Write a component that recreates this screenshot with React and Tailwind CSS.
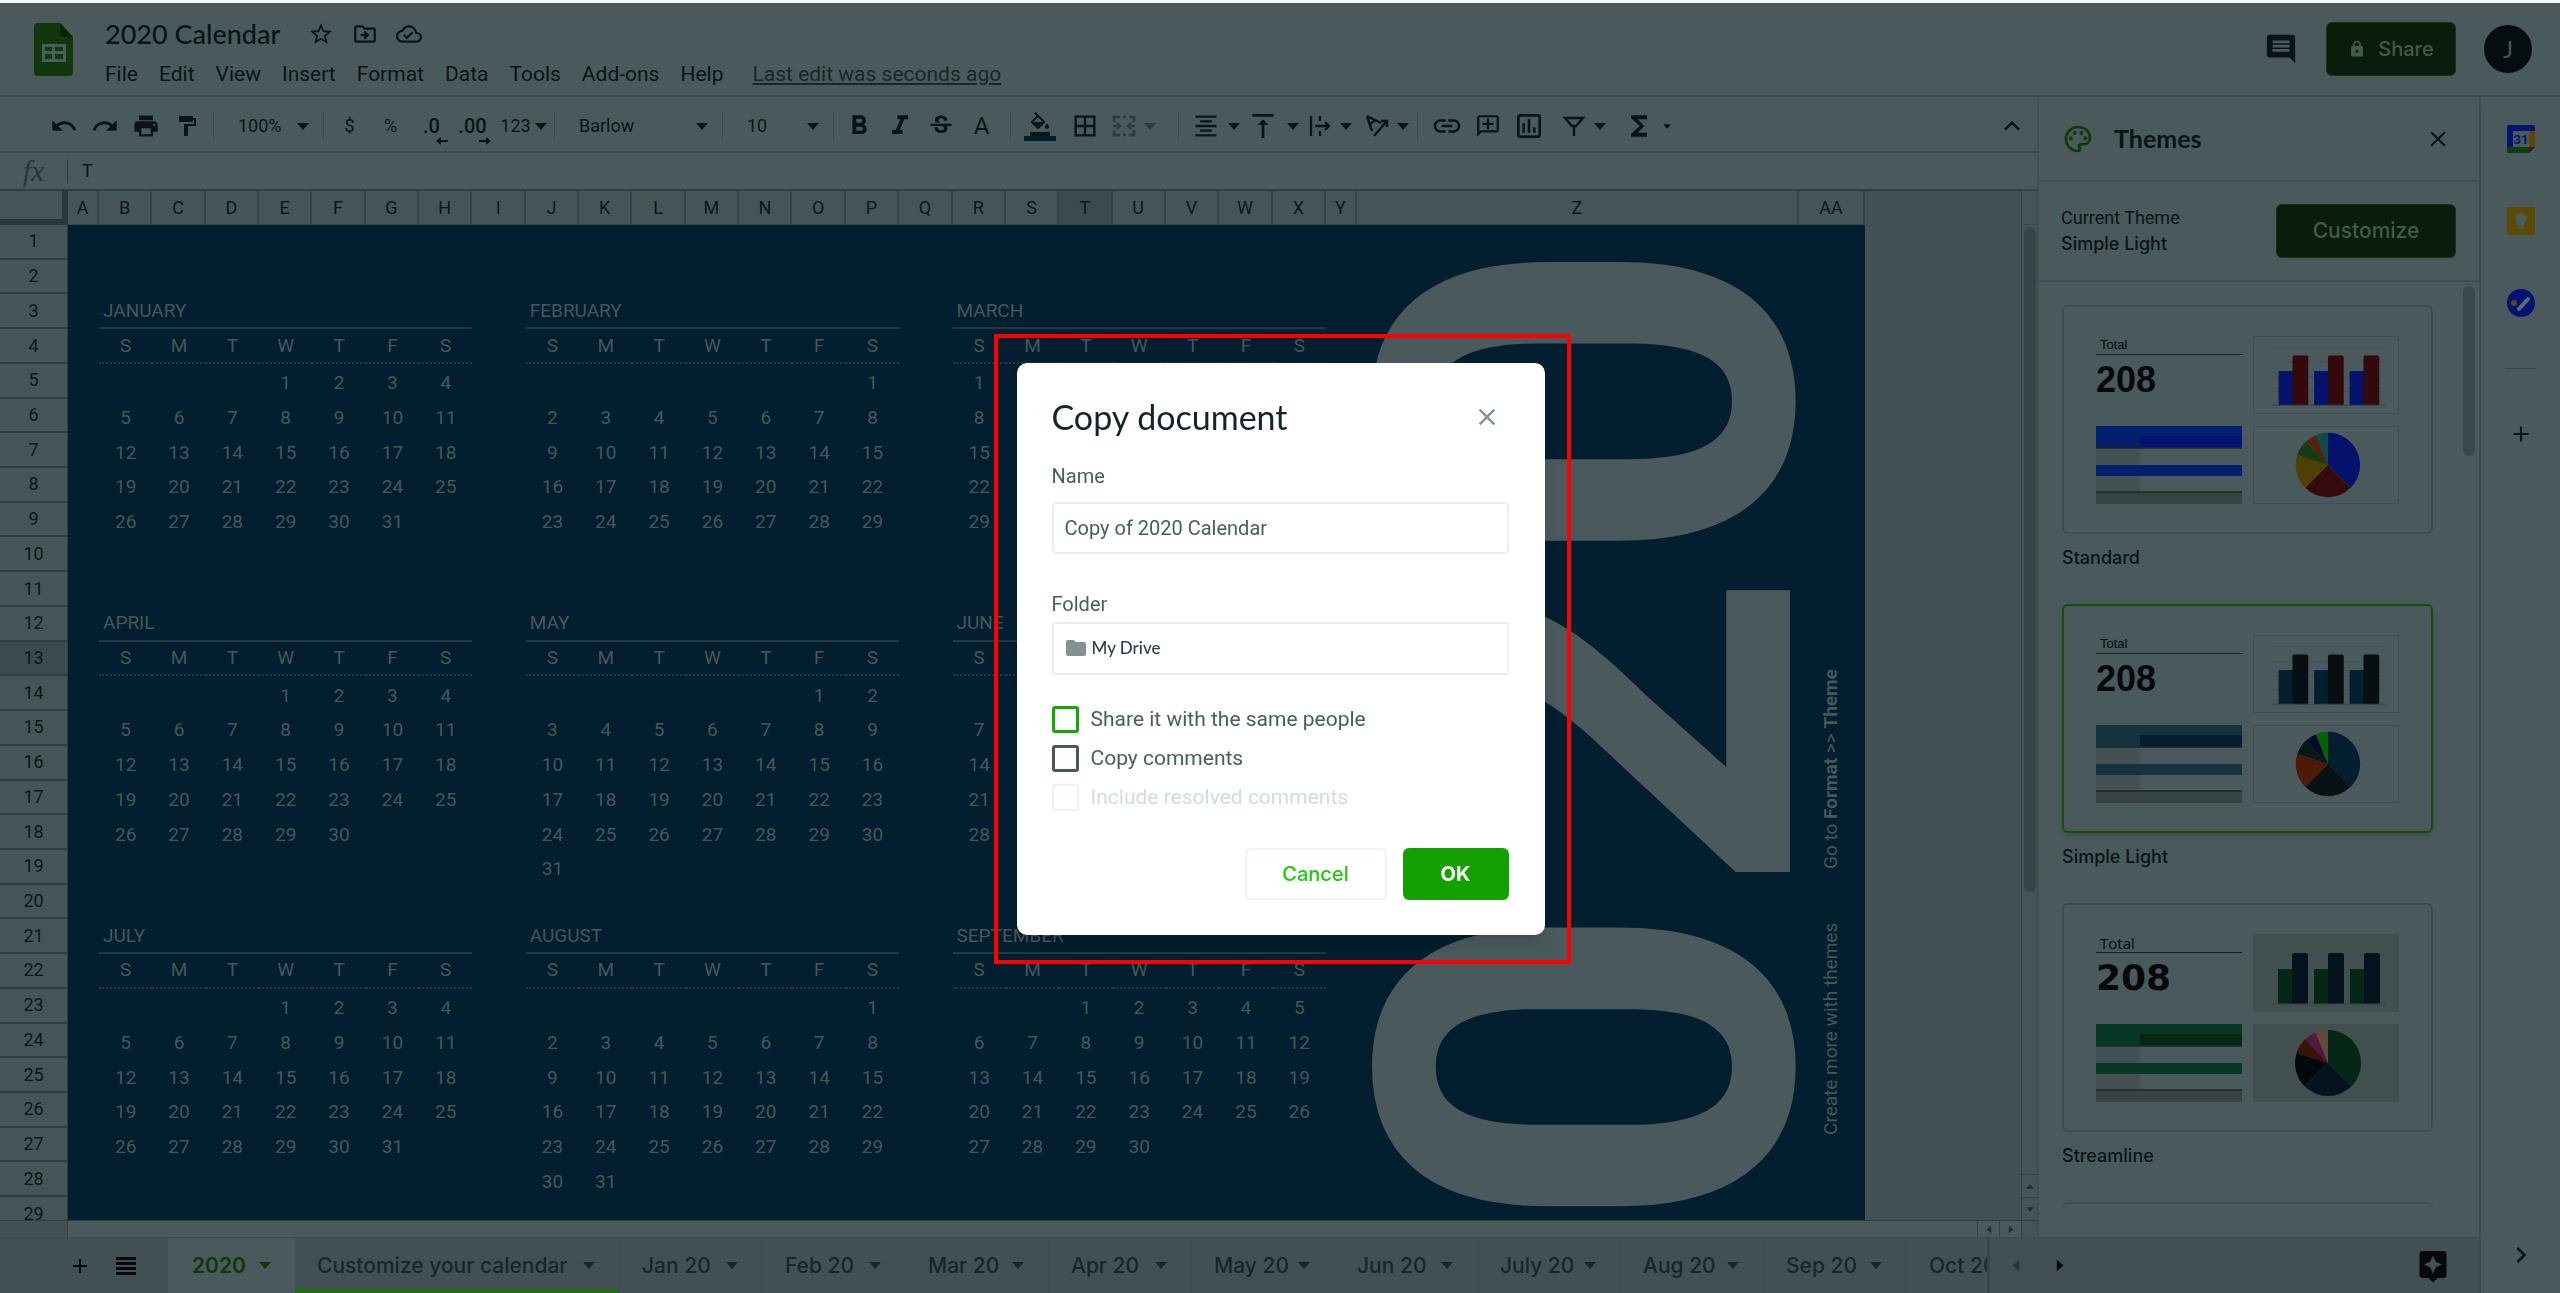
import { useState } from "react";
import clsx from "clsx";
import {
  MdAdd,
  MdAssistant,
  MdBorderAll,
  MdChevronRight,
  MdClose,
  MdComment,
  MdFolder,
  MdFormatAlignCenter,
  MdFormatBold,
  MdFormatColorFill,
  MdFormatItalic,
  MdFormatPaint,
  MdFunctions,
  MdInsertLink,
  MdKeyboardArrowUp,
  MdLock,
  MdOutlineAddComment,
  MdOutlineCloudDone,
  MdOutlineDriveFileMove,
  MdOutlineInsertChart,
  MdOutlinePalette,
  MdPrint,
  MdRedo,
  MdStarBorder,
  MdStrikethroughS,
  MdUndo,
  MdVerticalAlignTop,
} from "react-icons/md";

const MENUS = ["File", "Edit", "View", "Insert", "Format", "Data", "Tools", "Add-ons", "Help"];
const TABS = ["Jan 20", "Feb 20", "Mar 20", "Apr 20", "May 20", "Jun 20", "July 20", "Aug 20", "Sep 20"];
const COLUMNS = [..."ABCDEFGHIJKLMNOPQRSTUVWXYZ", "AA"];
const WEEKDAYS = ["S", "M", "T", "W", "T", "F", "S"];

// row / col: sheet position of the month title, start: weekday of the 1st
const MONTHS = [
  { name: "JANUARY", row: 3, col: 1, start: 3, days: 31 },
  { name: "FEBRUARY", row: 3, col: 9, start: 6, days: 29 },
  { name: "MARCH", row: 3, col: 17, start: 0, days: 31 },
  { name: "APRIL", row: 12, col: 1, start: 3, days: 30 },
  { name: "MAY", row: 12, col: 9, start: 5, days: 31 },
  { name: "JUNE", row: 12, col: 17, start: 1, days: 30 },
  { name: "JULY", row: 21, col: 1, start: 3, days: 31 },
  { name: "AUGUST", row: 21, col: 9, start: 6, days: 31 },
  { name: "SEPTEMBER", row: 21, col: 17, start: 2, days: 30 },
];

const THEMES = [
  {
    name: "Standard",
    font: "font-['Liberation_Sans'] text-[36px]",
    labelFont: "font-['Liberation_Sans'] text-[13px]",
    bars: ["#04126c", "#34090c"],
    pie: ["#04126c", "#340a0c", "#4e3f02", "#143b12", "#54210a", "#0d4a48"],
    table: ["#031f6e", "#021372"],
  },
  {
    name: "Simple Light",
    font: "font-['Liberation_Sans'] text-[36px]",
    labelFont: "font-['Liberation_Sans'] text-[13px]",
    bars: ["#021e2f", "#070f12"],
    pie: ["#021e2f", "#0a1114", "#4f1a05", "#081817", "#060a26", "#026406"],
    table: ["#15323f", "#021e2f"],
  },
  {
    name: "Streamline",
    font: "font-['DejaVu_Sans'] text-[36px]",
    labelFont: "font-['Open_Sans'] text-[15px]",
    bars: ["#042716", "#05131f"],
    pie: ["#042716", "#05131f", "#04090f", "#3a1208", "#531840", "#604a3c"],
    table: ["#073826", "#052716"],
    tinted: true,
  },
];

const PIE_STOPS = [0, 135, 225, 288, 316, 338, 360];

function Caret({ small, className }) {
  return (
    <svg
      viewBox="0 0 12 7"
      className={clsx("shrink-0", small ? "h-[5px] w-2" : "h-[7px] w-3", className)}
      fill="currentColor"
      aria-hidden="true"
    >
      <path d="M0 0h12L6 7z" />
    </svg>
  );
}

function Divider() {
  return <span className="h-[30px] w-px shrink-0 bg-[#3c4b50]" />;
}

function Tool({ label, wide, children }) {
  return (
    <button
      aria-label={label}
      className={clsx("flex h-10 shrink-0 items-center justify-center gap-2", wide ? "w-[57px]" : "w-[41px]")}
    >
      {children}
    </button>
  );
}

function ToolSelect({ label, value, className }) {
  return (
    <div className={clsx("relative flex shrink-0 items-center", className)}>
      <select aria-label={label} defaultValue={value} className="w-full appearance-none bg-transparent pl-6 text-lg leading-6">
        <option>{value}</option>
      </select>
      <Caret className="pointer-events-none absolute right-3.5" />
    </div>
  );
}

function SheetsLogo() {
  return (
    <svg viewBox="0 0 39 53" className="h-[53px] w-[39px]" aria-hidden="true">
      <path d="M4 0h22l13 14v35a4 4 0 0 1-4 4H4a4 4 0 0 1-4-4V4a4 4 0 0 1 4-4z" fill="#12370c" />
      <path d="M26 0l13 14H29a3 3 0 0 1-3-3z" fill="#0a2409" />
      <path d="M8 21h24v18H8zM11 24v4h7v-4zM21 24v4h8v-4zM11 31v5h7v-5zM21 31v5h8v-5z" fill="#45605a" fillRule="evenodd" />
    </svg>
  );
}

function Header() {
  return (
    <header className="flex h-[94px] shrink-0 items-center border-b-2 border-[#3d4c50] pr-7 pl-[34px]">
      <SheetsLogo />
      <div className="ml-8 flex flex-col pt-2.5">
        <div className="flex h-10 items-center gap-[18px]">
          <h1 className="mr-2.5 font-['Lato'] text-[27px] leading-10 font-medium">2020 Calendar</h1>
          <button aria-label="Star"><MdStarBorder className="size-[26px]" /></button>
          <button aria-label="Move"><MdOutlineDriveFileMove className="size-[26px]" /></button>
          <button aria-label="Document status"><MdOutlineCloudDone className="size-[26px]" /></button>
        </div>
        <nav className="flex h-10 items-center gap-[21px] text-[21px] leading-7">
          {MENUS.map((m) => (
            <button key={m}>{m}</button>
          ))}
          <a href="#history" className="ml-2 text-[#19262a] underline">
            Last edit was seconds ago
          </a>
        </nav>
      </div>
      <div className="ml-auto flex items-center">
        <button aria-label="Comments" className="mr-7"><MdComment className="size-[34px]" /></button>
        <button className="mr-7 flex h-[54px] w-[130px] items-center justify-center gap-3 rounded-md border border-[#12370c] bg-[#0a1c0c] font-['Inter'] text-xl font-medium text-[#3f5d46]">
          <MdLock className="size-[18px]" />
          Share
        </button>
        <button aria-label="Account" className="size-12 rounded-full bg-[#060d10] font-['Lato'] text-2xl text-[#46555a]">
          J
        </button>
      </div>
    </header>
  );
}

function Toolbar() {
  return (
    <div className="flex h-14 shrink-0 items-center border-b-2 border-[#3d4c50] pt-1 pl-[43px]">
      <Tool label="Undo"><MdUndo className="size-7" /></Tool>
      <Tool label="Redo"><MdRedo className="size-7" /></Tool>
      <Tool label="Print"><MdPrint className="size-7" /></Tool>
      <Tool label="Paint format"><MdFormatPaint className="size-6" /></Tool>
      <span className="w-1.5" />
      <Divider />
      <ToolSelect label="Zoom" value="100%" className="w-[109px]" />
      <Divider />
      <span className="w-[5px]" />
      <Tool label="Currency"><span className="text-lg">$</span></Tool>
      <Tool label="Percent"><span className="text-lg">%</span></Tool>
      <Tool label="Decrease decimals">
        <span className="relative text-[20px] font-medium">
          .0
          <svg viewBox="0 0 12 8" className="absolute -right-2 bottom-[-4px] h-2 w-3" fill="currentColor"><path d="M0 4l5-4v3h7v2H5v3z" /></svg>
        </span>
      </Tool>
      <Tool label="Increase decimals">
        <span className="relative text-[20px] font-medium">
          .00
          <svg viewBox="0 0 12 8" className="absolute -right-1 bottom-[-4px] h-2 w-3" fill="currentColor"><path d="M12 4L7 0v3H0v2h7v3z" /></svg>
        </span>
      </Tool>
      <button className="flex w-[61px] items-center justify-center gap-1 text-lg">
        123 <Caret />
      </button>
      <Divider />
      <ToolSelect label="Font" value="Barlow" className="w-[167px]" />
      <Divider />
      <ToolSelect label="Font size" value="10" className="w-[110px]" />
      <Divider />
      <span className="w-1" />
      <Tool label="Bold"><MdFormatBold className="size-8" /></Tool>
      <Tool label="Italic"><MdFormatItalic className="size-8" /></Tool>
      <Tool label="Strikethrough"><MdStrikethroughS className="size-7" /></Tool>
      <Tool label="Text color"><span className="text-2xl leading-6">A</span></Tool>
      <span className="w-2" />
      <Divider />
      <span className="w-2" />
      <Tool label="Fill color">
        <span className="flex flex-col items-center">
          <MdFormatColorFill className="size-6" />
          <span className="h-[5px] w-8 bg-[#021e33]" />
        </span>
      </Tool>
      <span className="w-1" />
      <Tool label="Borders"><MdBorderAll className="size-7" /></Tool>
      <Tool label="Merge cells" wide>
        <svg viewBox="0 0 24 24" className="size-6 shrink-0 text-[#2b3a3e]" fill="none" stroke="currentColor" strokeWidth="2.4">
          <path d="M2 8V3h6M11 3h3M17 3h5v5M2 16v5h6M11 21h3M17 21h5v-5M1 12h7M5 9l3 3-3 3M23 12h-7M19 9l-3 3 3 3" />
        </svg>
        <Caret className="text-[#2b3a3e]" />
      </Tool>
      <span className="w-4" />
      <Divider />
      <span className="w-2" />
      <Tool label="Horizontal align" wide><MdFormatAlignCenter className="size-7 shrink-0" /><Caret /></Tool>
      <Tool label="Vertical align" wide><MdVerticalAlignTop className="size-8 shrink-0" /><Caret /></Tool>
      <Tool label="Text wrapping" wide>
        <svg viewBox="0 0 24 24" className="size-6 shrink-0" fill="none" stroke="currentColor" strokeWidth="2.4">
          <path d="M3 2v20M12 2v5M12 17v5M7 12h14M17 8l4 4-4 4" />
        </svg>
        <Caret />
      </Tool>
      <Tool label="Text rotation" wide>
        <svg viewBox="0 0 24 24" className="size-6 shrink-0" fill="none" stroke="currentColor" strokeWidth="2.4">
          <path d="M2 2l5 15M2 2l14 7M5 10l6-4M9 22L22 7M16 7h6v6" />
        </svg>
        <Caret />
      </Tool>
      <span className="w-0.5" />
      <Divider />
      <span className="w-2" />
      <Tool label="Insert link"><MdInsertLink className="size-8" /></Tool>
      <Tool label="Insert comment"><MdOutlineAddComment className="size-[26px] -scale-x-100" /></Tool>
      <Tool label="Insert chart"><MdOutlineInsertChart className="size-8" /></Tool>
      <span className="w-1.5" />
      <Tool label="Create a filter" wide>
        <svg viewBox="0 0 24 24" className="size-6 shrink-0" fill="none" stroke="currentColor" strokeWidth="2.4">
          <path d="M3 4h18l-7 8H10zM12 11v11" />
        </svg>
        <Caret />
      </Tool>
      <span className="w-1.5" />
      <Tool label="Functions" wide><MdFunctions className="size-8 shrink-0" /><Caret small /></Tool>
      <button aria-label="Hide menus" className="mr-2.5 ml-auto"><MdKeyboardArrowUp className="size-8" /></button>
    </div>
  );
}

function FormulaBar() {
  return (
    <div className="flex h-9 shrink-0 items-center">
      <span className="w-[67px] text-center font-['Liberation_Serif'] text-[30px] leading-8 text-[#26363a] italic">fx</span>
      <span className="h-6 w-px bg-[#2b3a3e]" />
      <input aria-label="Formula" defaultValue="T" className="flex-1 bg-transparent px-3.5 text-lg leading-6 outline-none" />
    </div>
  );
}

// One sheet row from column A to Y
function rowCells(row) {
  const cells = [];
  for (let col = 0; col < 25; col++) {
    const month = MONTHS.find((m) => row >= m.row && row < m.row + 8 && col >= m.col && col < m.col + 7);
    if (!month) {
      cells.push(<td key={col} />);
      continue;
    }
    const line = row - month.row;
    const weekday = col - month.col;
    if (line === 0) {
      cells.push(
        <td key={col} colSpan={7} className="border-b-2 border-[#22383f] px-1 text-left">
          {month.name}
        </td>
      );
      col += 6;
    } else if (line === 1) {
      cells.push(
        <td key={col} className="border-b-2 border-dotted border-[#22383f]">
          {WEEKDAYS[weekday]}
        </td>
      );
    } else {
      const day = (line - 2) * 7 + weekday - month.start + 1;
      cells.push(
        <td key={col} className="pt-1">
          {day > 0 && day <= month.days ? day : null}
        </td>
      );
    }
  }
  return cells;
}

function Sheet() {
  return (
    <div className="flex min-h-0 flex-1">
      <div className="min-w-0 flex-1 overflow-hidden border-t-2 border-[#2f3c40] bg-[#435154]">
        <table className="h-[1041px] w-[1865px] table-fixed border-separate border-spacing-0 text-center text-[19px] leading-6 text-[#46575a]">
          <colgroup>
            <col className="w-[68px]" />
            {COLUMNS.map((c) => (
              <col
                key={c}
                className={clsx(
                  (c === "A" || c === "Y") && "w-[31px]",
                  c === "Z" && "w-[442px]",
                  c === "AA" && "w-[66px]"
                )}
              />
            ))}
          </colgroup>
          <thead>
            <tr className="text-lg text-[#0d171a]">
              <td className="h-[34px] border-r-[6px] border-b-[6px] border-[#2b3638] bg-[#445557]" />
              {COLUMNS.map((c) => (
                <th
                  key={c}
                  className={clsx(
                    "h-[34px] border-r-2 border-b border-[#35444a] p-0 font-normal",
                    c === "T" ? "bg-[#3c494f]" : "bg-[#445557]"
                  )}
                >
                  {c}
                </th>
              ))}
            </tr>
          </thead>
          <tbody className="bg-[#021e2f]">
            {Array.from({ length: 29 }, (_, i) => i + 1).map((row) => (
              <tr key={row}>
                <th
                  className={clsx(
                    "h-[34px] border-r border-b-2 border-[#2f3c40] p-0 text-lg font-normal text-[#0d171a]",
                    row === 13 ? "bg-[#3c494f]" : "bg-[#445557]"
                  )}
                >
                  {row}
                </th>
                {rowCells(row)}
                {row === 1 && (
                  <>
                    <td rowSpan={29} className="relative">
                      <span className="absolute top-2.5 left-3.5 rotate-180 text-[580px] leading-[442px] font-bold text-[#4a595c] [writing-mode:vertical-rl]">
                        020
                      </span>
                    </td>
                    <td rowSpan={29} className="relative">
                      <div className="absolute top-[444px] left-5 flex rotate-180 gap-[54px] whitespace-nowrap [writing-mode:vertical-rl]">
                        <span>Create more with themes</span>
                        <span>
                          Go to <b>Format</b> &gt;&gt; <b>Theme</b>
                        </span>
                      </div>
                    </td>
                  </>
                )}
              </tr>
            ))}
          </tbody>
        </table>
      </div>
      <div className="flex w-[17px] shrink-0 flex-col border-t-2 border-l border-[#35444a] bg-[#455557]">
        <span className="h-[34px] border-b border-[#3a494c]" />
        <span className="mx-0.5 mt-0.5 h-[665px] rounded-full bg-[#35444b]" />
        <button aria-label="Scroll up" className="mt-auto flex h-[23px] items-center justify-center border-t border-[#35444a] text-[#1f2c30]">
          <Caret small className="rotate-180" />
        </button>
        <button aria-label="Scroll down" className="flex h-[23px] items-center justify-center border-t border-[#35444a] text-[#1f2c30]">
          <Caret small />
        </button>
      </div>
    </div>
  );
}

function SheetScrollBar() {
  return (
    <div className="flex h-[17px] shrink-0 border-t border-[#2f3c40]">
      <span className="w-[68px] border-r border-[#35444a] bg-[#435154]" />
      <span className="flex-1" />
      <button aria-label="Scroll left" className="flex w-[22px] items-center justify-center border-l border-[#35444a] text-[#1f2c30]">
        <Caret small className="rotate-90" />
      </button>
      <button aria-label="Scroll right" className="flex w-[22px] items-center justify-center border-l border-[#35444a] text-[#1f2c30]">
        <Caret small className="-rotate-90" />
      </button>
      <span className="w-[17px] border-l border-[#35444a] bg-[#455557]" />
    </div>
  );
}

function slicePath(from, to) {
  const at = (deg) => {
    const a = (deg * Math.PI) / 180;
    return `${75 + 33 * Math.sin(a)} ${39 - 33 * Math.cos(a)}`;
  };
  return `M75 39L${at(from)}A33 33 0 0 1 ${at(to)}Z`;
}

function ThemeCard({ theme, selected, onSelect }) {
  const panel = theme.tinted ? "bg-[#41504f]" : "border border-[#415054]";
  return (
    <div className="mb-[34px] w-[371px]">
      <button
        aria-label={theme.name}
        aria-pressed={selected}
        onClick={onSelect}
        className={clsx(
          "grid h-[229px] w-full grid-cols-2 grid-rows-[78px_78px] gap-x-[11px] gap-y-3 rounded-md px-8 pt-[29px] text-left",
          selected ? "border-2 border-[#184a0b] shadow-md" : "border-2 border-[#3d4c52]"
        )}
      >
        <span className="flex flex-col text-[#05090b]">
          <span className={clsx("border-b border-[#141d20] pl-1 leading-[18px]", theme.labelFont)}>Total</span>
          <span className={clsx("leading-[50px] font-bold", theme.font)}>208</span>
        </span>
        <svg viewBox="0 0 146 78" preserveAspectRatio="none" className={clsx("h-full w-full", panel)} aria-hidden="true">
          <path d="M18 11h115M18 26h115M18 41h115M18 56h115" stroke="#435256" />
          {[25, 61, 97].map((x) => (
            <g key={x}>
              <rect x={x} y="35" width="15" height="35" fill={theme.bars[0]} />
              <rect x={x + 14} y="19" width="16" height="51" rx="2" fill={theme.bars[1]} />
            </g>
          ))}
          <path d="M18 70h115" stroke="#35444a" />
        </svg>
        <svg viewBox="0 0 146 78" preserveAspectRatio="none" className="h-full w-full" aria-hidden="true">
          <rect width="146" height="22" fill={theme.table[0]} />
          <rect x="44" y="10" width="102" height="12" fill={theme.table[1]} />
          <rect y="22" width="44" height="44" fill="#435153" />
          <rect y="39" width="146" height="11" fill={theme.table[0]} />
          <rect y="66" width="146" height="12" fill="#374341" />
          <path d="M0 22h146M0 66h146" stroke="#1c2628" strokeWidth="1.5" />
        </svg>
        <svg viewBox="0 0 146 78" className={clsx("h-full w-full", panel)} aria-hidden="true">
          {theme.pie.map((color, i) => (
            <path key={color} d={slicePath(PIE_STOPS[i], PIE_STOPS[i + 1])} fill={color} />
          ))}
        </svg>
      </button>
      <p className="mt-3 font-['Inter'] text-lg leading-6 font-medium">{theme.name}</p>
    </div>
  );
}

function ThemesPanel() {
  const [selected, setSelected] = useState("Simple Light");
  return (
    <aside className="flex w-[441px] shrink-0 flex-col border-l border-[#414f53] shadow-md">
      <div className="flex h-[85px] shrink-0 items-center border-b-2 border-[#3f4e52] pr-7 pl-[23px]">
        <MdOutlinePalette className="size-8 text-[#12370c]" />
        <h2 className="ml-5 font-['Lato'] text-[25px] font-bold">Themes</h2>
        <button aria-label="Close themes" className="ml-auto"><MdClose className="size-[26px]" /></button>
      </div>
      <div className="flex h-[100px] shrink-0 items-center justify-between border-b-2 border-[#3f4e52] pr-[23px] pl-[22px]">
        <div className="text-lg leading-[26px]">
          <p>Current Theme</p>
          <p className="font-['Inter'] font-medium">Simple Light</p>
        </div>
        <button className="h-[54px] w-[180px] rounded-md border border-[#12370c] bg-[#0a1c0c] font-['Inter'] text-[21px] font-medium text-[#3f5d46]">
          Customize
        </button>
      </div>
      <div className="mb-[30px] flex min-h-0 flex-1 justify-between overflow-hidden pr-1 pl-[23px]">
        <div className="pt-[23px]">
          {THEMES.map((t) => (
            <ThemeCard key={t.name} theme={t} selected={t.name === selected} onSelect={() => setSelected(t.name)} />
          ))}
          <div className="h-20 rounded-md border-2 border-[#3d4c52]" />
        </div>
        <span className="mt-1 h-[170px] w-3 rounded-full bg-[#3a474f]" />
      </div>
    </aside>
  );
}

function SideRail() {
  return (
    <div className="flex w-[81px] shrink-0 flex-col items-center border-l-2 border-[#3d4c50] pt-7">
      <button aria-label="Calendar">
        <svg viewBox="0 0 28 28" className="size-7">
          <rect width="28" height="28" rx="2" fill="#03166f" />
          <path d="M22 6h6v16h-6z" fill="#5c4700" />
          <path d="M0 22h22v6H2a2 2 0 0 1-2-2z" fill="#0e3d0f" />
          <path d="M22 22h6l-6 6z" fill="#5a0a0a" />
          <path d="M22 28l6-6v6z" fill="#4a595c" />
          <rect x="6" y="6" width="16" height="16" fill="#4a595c" />
          <text x="14" y="19" textAnchor="middle" fontSize="13" fontWeight="700" fill="#03166f">31</text>
        </svg>
      </button>
      <button aria-label="Keep" className="mt-[54px]">
        <svg viewBox="0 0 28 28" className="size-7">
          <rect width="28" height="28" rx="2" fill="#5a4a02" />
          <path d="M14 6a6 6 0 0 0-3 11v2h6v-2a6 6 0 0 0-3-11zM11 20h6v2h-6z" fill="#4a5c56" />
        </svg>
      </button>
      <button aria-label="Tasks" className="mt-[54px]">
        <svg viewBox="0 0 28 28" className="size-7">
          <circle cx="14" cy="14" r="14" fill="#041273" />
          <path d="M12 20L21 10" stroke="#5b6c72" strokeWidth="4" strokeLinecap="round" />
          <circle cx="7" cy="14" r="3" fill="#5a4a02" />
        </svg>
      </button>
      <span className="mt-[51px] h-px w-[30px] bg-[#35444a]" />
      <button aria-label="Get add-ons" className="mt-[52px]"><MdAdd className="size-[26px]" /></button>
      <button aria-label="Hide side panel" className="mt-auto mb-[22px]"><MdChevronRight className="size-8" /></button>
    </div>
  );
}

function SheetTabs() {
  return (
    <footer className="flex h-14 shrink-0 items-stretch border-t border-[#3d4c50] bg-[#425055] font-['Inter'] text-[21px] font-medium text-[#18262a]">
      <div className="flex w-[168px] shrink-0 items-center gap-6 pl-[68px] text-[#05090b]">
        <button aria-label="Add sheet"><MdAdd className="size-6" /></button>
        <button aria-label="All sheets">
          <svg viewBox="0 0 20 20" className="size-5" fill="currentColor">
            <path d="M0 1h20v3H0zM0 6h20v3H0zM0 11h20v3H0zM0 16h20v3H0z" />
          </svg>
        </button>
      </div>
      <button className="flex w-[127px] shrink-0 items-center justify-between bg-[#4a595c] px-6 font-semibold text-[#0f3a08]">
        2020 <Caret />
      </button>
      <button className="flex w-[324px] shrink-0 items-center justify-between border-b-4 border-[#1a7005] pt-1 pr-6 pl-[22px]">
        Customize your calendar <Caret />
      </button>
      <div className="flex min-w-0 flex-1 overflow-hidden">
        {TABS.map((t) => (
          <button key={t} className="flex w-[143px] shrink-0 items-center justify-between border-l border-[#3d4b4f] pr-6 pl-[22px]">
            {t} <Caret />
          </button>
        ))}
        <button className="shrink-0 border-l border-[#3d4b4f] px-[22px]">Oct 20</button>
      </div>
      <div className="flex w-[492px] shrink-0 items-center border-l-[3px] border-[#374545] pl-5 text-[#05090b]">
        <button aria-label="Previous sheets"><Caret className="rotate-90 text-[#26353a]" /></button>
        <button aria-label="Next sheets" className="ml-8"><Caret className="-rotate-90" /></button>
        <button aria-label="Explore" className="mr-7 ml-auto"><MdAssistant className="size-9" /></button>
      </div>
    </footer>
  );
}

function CheckRow({ id, label, accent, disabled }) {
  return (
    <div className="flex h-[39px] items-center gap-3">
      <input
        id={id}
        type="checkbox"
        disabled={disabled}
        className={clsx(
          "size-[27px] appearance-none rounded-[3px]",
          accent && "border-[3px] border-[#14a800]",
          disabled && "border-2 border-[#ecf1f2]",
          !accent && !disabled && "border-[3px] border-[#435a66]"
        )}
      />
      <label htmlFor={id} className={clsx("text-[21px] leading-7", disabled ? "text-[#d2dcdd]" : "text-[#46605f]")}>
        {label}
      </label>
    </div>
  );
}

function CopyDialog() {
  return (
    <div className="fixed inset-0 flex items-center justify-center pt-1 pl-1">
      <div className="border-4 border-[#ff0000] py-[25px] pr-[22px] pl-[19px]">
        <div
          role="dialog"
          aria-labelledby="copy-title"
          className="flex h-[572px] w-[528px] flex-col rounded-[10px] bg-white pt-[33px] pr-9 pl-[35px] text-[20px] leading-7 text-[#46605f] shadow-lg"
        >
          <div className="flex items-center justify-between pr-2">
            <h2 id="copy-title" className="font-['Lato'] text-[34px] leading-[42px] text-[#13242b]">
              Copy document
            </h2>
            <button aria-label="Close" className="text-[#7f9292]"><MdClose className="size-7" /></button>
          </div>
          <label htmlFor="copy-name" className="mt-6">Name</label>
          <input
            id="copy-name"
            defaultValue="Copy of 2020 Calendar"
            className="mt-3 h-[52px] rounded-[5px] border-2 border-[#e8eef1] px-[11px] outline-none"
          />
          <span id="copy-folder" className="mt-9">Folder</span>
          <button
            aria-labelledby="copy-folder copy-folder-value"
            className="mt-1 flex h-[53px] items-center gap-1 rounded-[3px] border-2 border-[#e8eef1] px-2.5 font-['Lato'] text-[17px] font-medium text-[#2b4346]"
          >
            <MdFolder className="size-6 text-[#809391]" />
            <span id="copy-folder-value">My Drive</span>
          </button>
          <div className="mt-[25px]">
            <CheckRow id="share" label="Share it with the same people" accent />
            <CheckRow id="comments" label="Copy comments" />
            <CheckRow id="resolved" label="Include resolved comments" disabled />
          </div>
          <div className="mt-[31px] flex justify-end gap-4 font-['Inter']">
            <button className="h-[52px] w-[142px] rounded-md border-2 border-[#edf2f4] font-medium text-[#22c90c]">Cancel</button>
            <button className="h-[52px] w-[106px] rounded-md bg-[#14a000] font-bold text-white">OK</button>
          </div>
        </div>
      </div>
    </div>
  );
}

function App() {
  return (
    <div className="flex h-screen flex-col overflow-hidden border-t-[3px] border-[#f4f9f8] bg-[#4a595c] font-['Roboto',sans-serif] text-[#0a1417]">
      <Header />
      <div className="flex min-h-0 flex-1">
        <main className="flex min-w-0 flex-1 flex-col">
          <div className="flex min-h-0 flex-1">
            <div className="flex min-w-0 flex-1 flex-col">
              <Toolbar />
              <FormulaBar />
              <Sheet />
              <SheetScrollBar />
            </div>
            <ThemesPanel />
          </div>
          <SheetTabs />
        </main>
        <SideRail />
      </div>
      <CopyDialog />
    </div>
  );
}

export default App;
